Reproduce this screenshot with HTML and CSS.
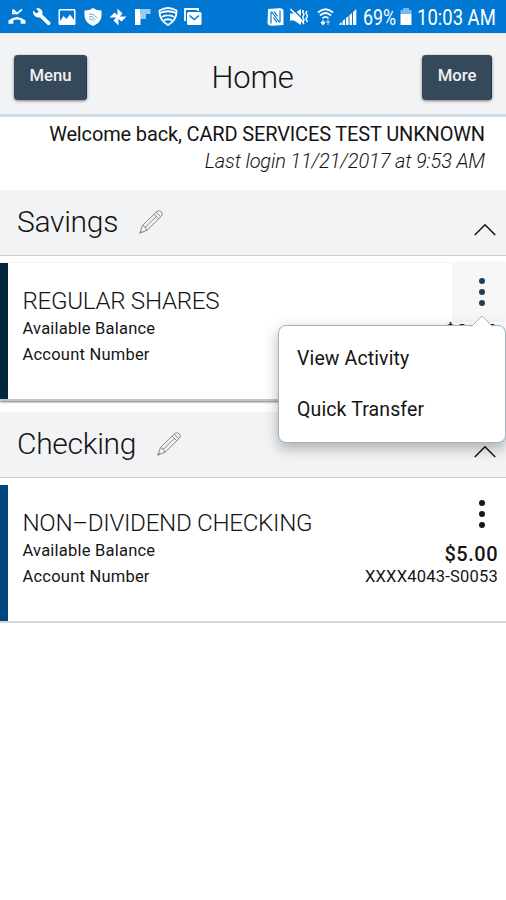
FILE: index.html
```html
<!DOCTYPE html>
<html lang="en">
<head>
<meta charset="utf-8">
<title>Home</title>
<link rel="stylesheet" href="styles.css">
</head>
<body>
<div class="status">
  <div class="status-left">
    <svg width="18" height="18" viewBox="0 0 18 18"><path d="M.5 15.700V12.500Q9 5.500 17.500 12.500V15.700H12.700V12.200Q9 11 5.300 12.200V15.700Z" fill="#fff"/><path d="M5 1.500V5.500H8.500M5 1.500L9 5.500L14 1.500" fill="none" stroke="#fff" stroke-width="1.700"/></svg>
    <svg class="wide" width="20" height="18" viewBox="0 0 20 18"><path d="M1.200 2.500L4.500 5.600L6.800 3.400L4 .5C8-.8 11.500 2.500 10.300 6.500L18.500 14.400Q19 16 17.200 17.200L15.800 17L8 9.400C4 10.500.300 7 1.200 2.500Z" fill="#fff"/></svg>
    <svg width="18" height="18" viewBox="0 0 18 18"><path fill="#fff" fill-rule="evenodd" d="M2 1H16Q17.500 1 17.500 2.500V15.500Q17.500 17 16 17H2Q.500 17 .500 15.500V2.500Q.500 1 2 1ZM2 2.500V13L5.500 8L8.500 11L12 6.500L16 12V2.500Z"/></svg>
    <svg width="18" height="18" viewBox="0 0 18 18"><path fill="#fff" d="M9 0Q12.500 2.500 17.500 2.500V8Q17 15 9 18Q1 15 .500 8V2.500Q5.500 2.500 9 0Z"/><path d="M5 6Q10 5 13 10M5 8.500Q9 7.500 11.500 12M5 11Q8 10 9.500 13" fill="none" stroke="#0078d4" stroke-width=".9" opacity=".7"/></svg>
    <svg width="18" height="18" viewBox="0 0 18 18"><path fill="#fff" d="M8.500 9V.5L13.500 5.500L10.500 9ZM9 8.500H17.500L12.500 13.500L9 10.500ZM9.500 9V17.500L4.500 12.500L7.500 9ZM9 9.500H.5L5.500 4.500L9 7.500Z"/></svg>
    <svg width="18" height="18" viewBox="0 0 18 18"><path fill="#fff" d="M1 1H6.500V17H1ZM6.500 6H12V11H6.500Z"/><path fill="#9bcaf0" d="M6.500 1H16.500V6H6.500ZM6.500 6H12V11H6.500Z"/></svg>
    <svg class="wide" width="20" height="19" viewBox="0 0 20 19"><path d="M10 1Q14 1 18.500 3.500Q19 13 10 18Q1 13 1.500 3.500Q6 1 10 1Z" fill="none" stroke="#fff" stroke-width="1.800"/><path d="M2 6Q10 2.500 18 6M4 9.800Q10 7 16 9.800M6 13.300Q10 11.300 14 13.300" fill="none" stroke="#fff" stroke-width="1.900"/></svg>
    <svg width="18" height="18" viewBox="0 0 18 18"><path d="M1 13V1H14V3" fill="none" stroke="#fff" stroke-width="1.800"/><rect x="3" y="4" width="14.500" height="13" rx="1.500" fill="#fff"/><path d="M5.500 7.500L10.200 11.500L15 7.500" fill="none" stroke="#0078d4" stroke-width="1.500"/></svg>
  </div>
  <div class="status-right">
    <svg class="nfc" width="17" height="18" viewBox="0 0 17 18"><path fill="#fff" d="M1 1L12 .3Q16.500 0 16.500 3V17L5 17.700Q.500 17.500 .500 15Z"/><path d="M4 15.500V4M13 2.500V14M4.500 3.500L12.500 14.500" fill="none" stroke="#0078d4" stroke-width="1.200"/><path d="M7 3.500L10.500 8.300M6.500 9.700L10 14.500" fill="none" stroke="#0078d4" stroke-width="1.200"/></svg>
    <svg class="mute" width="20" height="18" viewBox="0 0 20 18"><path fill="#fff" d="M1 5.500H5L12 1V17L5 12.500H1Z"/><path d="M3.500 .5L14 11.500" stroke="#0078d4" stroke-width="1.300"/><path d="M1.500 1L14 14" stroke="#fff" stroke-width="1.600"/><path d="M14.500 2L13.700 4L15 6.500L13.700 9L15 12L13.700 14L15 16M18 3L17 5L18.500 8L17 11L18.500 14" fill="none" stroke="#fff" stroke-width="1.500"/></svg>
    <svg class="wifi" width="17" height="18" viewBox="0 0 17 18"><path d="M1 4.500Q8.500-2 16 4.500M3 7.500Q8.500 2.500 14 7.500M5.500 10.300Q8.500 7.500 11.500 10.300" fill="none" stroke="#fff" stroke-width="1.800"/><path d="M6 12V16M4 14L6 16.500L8 14" fill="none" stroke="#fff" stroke-width="1.400"/><path d="M11 17V12.500M9.200 14.500L11 12.500L12.800 14.500" fill="none" stroke="#8bc2ee" stroke-width="1.300"/></svg>
    <svg class="signal" width="18" height="18" viewBox="0 0 18 18"><path fill="#fff" d="M.500 17V15.800L2.700 14V17ZM3.600 17V13L6 11V17ZM7 17V10L9.500 8V17ZM10.500 17V7L13 5V17ZM14 17V4L17.300 1V17Z"/></svg>
    <span class="pct"><b>69%</b></span>
    <svg class="battery" width="12" height="18" viewBox="0 0 12 18"><path fill="#79b9ea" d="M3 0H9V2H11.500V6H.500V2H3Z"/><path fill="#fff" d="M.500 6H11.500V17H.500Z"/></svg>
    <span class="clock"><b>10:03 AM</b></span>
  </div>
</div>
<header class="topbar">
  <button class="btn menu">Menu</button>
  <h1>Home</h1>
  <button class="btn more">More</button>
</header>
<div class="welcome">
  <p class="hello">Welcome back, CARD SERVICES TEST UNKNOWN</p>
  <p class="last">Last login 11/21/2017 at 9:53 AM</p>
</div>
<section>
  <div class="group-head">
    <h2>Savings</h2>
    <svg class="pencil" width="24" height="24" viewBox="0 0 24 24"><path d="M.8 23.200L3.500 15.500L18 1.400Q20.500-.2 22.300 1.800Q24.200 3.700 22.500 6L8 20.300ZM3.500 15.500Q6.500 16 8 20.300M15.200 4.200L19.800 8.800M17.200 2.200L21.700 6.800M6 17.500L17.300 6.500M.8 23.200L2.800 20.800"/></svg>
    <svg class="chevron" width="22" height="13" viewBox="0 0 22 13"><path d="M.8 12L11 1.800L21.200 12"/></svg>
  </div>
  <div class="card raised savings">
    <div class="details">
      <h3>REGULAR SHARES</h3>
      <p>Available Balance</p>
      <p>Account Number</p>
    </div>
    <div class="side">
      <div class="kebab active"><i></i><i></i><i></i></div>
      <p class="amount">$0.00</p>
    </div>
    <div class="popup">
      <svg class="arrow" width="22" height="12" viewBox="0 0 22 12"><path d="M.5 11.500L11 1L21.500 11.500" fill="#fff" stroke="#9db4c5"/></svg>
      <a>View Activity</a>
      <a>Quick Transfer</a>
    </div>
  </div>
</section>
<section>
  <div class="group-head">
    <h2>Checking</h2>
    <svg class="pencil" width="24" height="24" viewBox="0 0 24 24"><path d="M.8 23.200L3.500 15.500L18 1.400Q20.500-.2 22.300 1.800Q24.200 3.700 22.500 6L8 20.300ZM3.500 15.500Q6.500 16 8 20.300M15.200 4.200L19.800 8.800M17.200 2.200L21.700 6.800M6 17.500L17.300 6.500M.8 23.200L2.800 20.800"/></svg>
    <svg class="chevron" width="22" height="13" viewBox="0 0 22 13"><path d="M.8 12L11 1.800L21.200 12"/></svg>
  </div>
  <div class="card checking">
    <div class="details">
      <h3>NON–DIVIDEND CHECKING</h3>
      <p>Available Balance</p>
      <p>Account Number</p>
    </div>
    <div class="side">
      <div class="kebab"><i></i><i></i><i></i></div>
      <p class="amount">$5.00</p>
      <p class="number">XXXX4043-S0053</p>
    </div>
  </div>
</section>
</body>
</html>
```

FILE: styles.css
```css
* { box-sizing: border-box; }
body { margin: 0; background: #fff; color: #151515; font-family: Roboto, sans-serif; overflow: hidden; height: 900px; }
h1, h2, h3, p { margin: 0; font-weight: 300; white-space: nowrap; }
svg { display: block; flex: none; }

.status { height: 34px; background: #0078d4; border-bottom: 1px solid #dfeaf6; display: flex; justify-content: space-between; color: #fff; }
.status-left { display: flex; align-items: center; gap: 7.2px; padding-left: 8px; }
.wide { margin: 0 -1px; }
.status-right { display: flex; align-items: center; padding-right: 10px; font-size: 22px; line-height: 34px; white-space: nowrap; }
.status-right b { display: inline-block; font-weight: 400; transform-origin: left; transform: scaleX(.84); padding-top: 2px; }
.nfc { margin-right: 5px; }
.mute { margin-right: 8px; }
.wifi { margin-right: 5px; }
.signal { margin-right: 6px; }
.pct { width: 34px; }
.pct b { transform: scaleX(.81); }
.battery { margin: 0 5px 0 3px; }
.clock { width: 79px; }

.topbar { height: 83px; padding: 0 14px; background: #f2f3f5; border-bottom: 3px solid #cfdbe3; display: flex; align-items: center; justify-content: space-between; }
.topbar h1 { font-size: 31px; line-height: 40px; margin: 8px 4px 0 0; letter-spacing: -.25px; }
.btn { height: 45px; margin-top: 6px; padding: 0 0 3px; border: 0; border-radius: 4px; background: #36495b; box-shadow: 0 1px 3px rgba(0,0,0,.5), inset -1px 0 #203b55; color: #f0f2f4; font: 500 16.7px/42px Roboto, sans-serif; }
.menu { width: 73px; }
.more { width: 70px; }

.welcome { height: 73px; padding: 3px 21px 0 0; text-align: right; }
.hello { font-size: 20px; line-height: 28px; font-weight: 400; letter-spacing: -.15px; }
.last { font-size: 20px; line-height: 26px; font-style: italic; letter-spacing: -.16px; }

.group-head { height: 66px; padding-left: 17px; background: #f2f3f5; border-bottom: 1px solid #cdcfd1; display: flex; align-items: flex-start; }
.group-head h2 { font-size: 30px; line-height: 40px; margin-top: 12px; letter-spacing: -.3px; }
.pencil { margin: 20px 0 0 20.5px; fill: none; stroke: #888; stroke-width: 1; }
.chevron { margin: 33px 10px 0 auto; fill: none; stroke: #111; stroke-width: 1.5; }

.card { position: relative; height: 138px; margin-top: 7px; border-bottom: 2px solid #cbd8e2; display: flex; justify-content: space-between; }
.card::before { content: ""; width: 8px; background: #00477f; }
.savings::before { background: #002640; }
.raised { margin-bottom: 11px; border-bottom-color: #bdc7ce; box-shadow: 0 1px 2px rgba(0,0,0,.55); }
.details { flex: 1; padding: 22px 0 0 14.5px; }
.details h3 { font-size: 24.2px; line-height: 32px; letter-spacing: -.32px; }
.details p { font-size: 16.5px; line-height: 25.5px; font-weight: 400; letter-spacing: .22px; position: relative; top: -.6px; }
.side { width: 170px; text-align: right; }
.side p { padding-right: 8px; }
.kebab { width: 54px; height: 59px; margin-left: auto; padding: 15px 5px 0 10px; display: flex; flex-direction: column; align-items: center; gap: 5px; }
.kebab i { width: 6px; height: 6px; border-radius: 50%; background: #15191d; }
.active { background: #f6f6f6; }
.active i { background: #213d58; }
.side .amount { font-size: 20px; line-height: 20px; font-weight: 500; letter-spacing: .5px; }
.side .number { font-size: 16.5px; line-height: 25px; font-weight: 400; letter-spacing: .22px; }

.popup { position: absolute; z-index: 2; left: 278px; top: 62px; width: 228px; height: 118px; padding: 8px 0 0 18px; background: #fff; border: 1.5px solid #9db4c5; border-radius: 8px; box-shadow: 0 5px 14px rgba(0,0,0,.3); display: flex; flex-direction: column; align-items: flex-start; }
.popup a { font-size: 19.5px; line-height: 50.6px; height: 50.5px; white-space: nowrap; letter-spacing: .12px; }
.arrow { position: absolute; left: 192px; top: -11px; }
```
